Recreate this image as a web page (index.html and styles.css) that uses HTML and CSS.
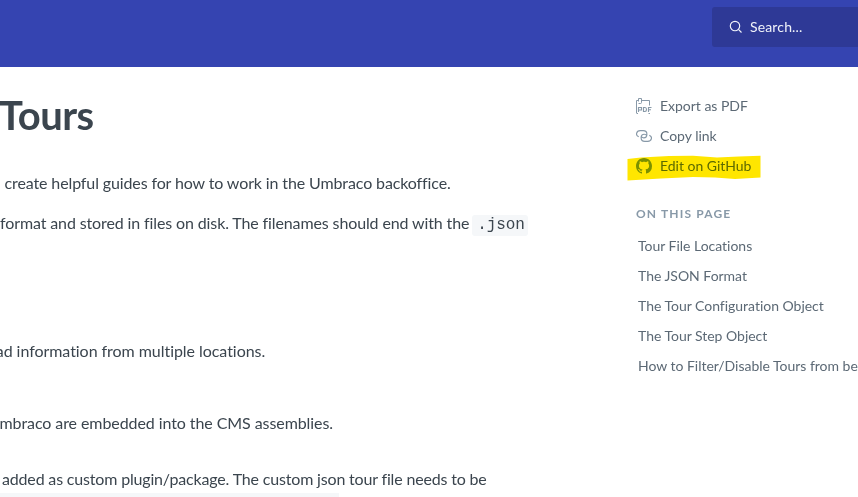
FILE: index.html
```
<!DOCTYPE html>
<html lang="en">
<head>
<meta charset="utf-8">
<title>Tours</title>
<link rel="stylesheet" href="styles.css">
</head>
<body>
<header class="topbar">
  <div class="search">
    <svg width="14" height="14" viewBox="0 0 14 14" fill="none" stroke="currentColor" stroke-width="1.15"><circle cx="6" cy="6" r="4.7"/><path d="M9.4 9.4 12.5 12.5"/></svg>
    <span>Search...</span>
  </div>
</header>
<div class="layout">
  <main class="content">
    <h1>Tours</h1>
    <p class="intro">to create helpful guides for how to work in the Umbraco backoffice.</p>
    <p class="format">format and stored in files on disk. The filenames should end with the <code>.json</code></p>
    <p class="locations">load information from multiple locations.</p>
    <p class="core">Umbraco are embedded into the CMS assemblies.</p>
    <p class="plugin">added as custom plugin/package. The custom json tour file needs to be</p>
    <div class="codeline"></div>
  </main>
  <aside class="side">
    <nav class="actions">
      <a><svg width="16" height="16" viewBox="0 0 16 16" fill="none" stroke="currentColor"><path d="M.5 15V2.5H2M5.5 2.5H13.5V7.5M2.5 3.5V.5H5.5V4.5Q5.5 5.5 4.5 5.5H2.5M.5 15.5H2M12.5 15.5H14"/><path stroke-width="1.15" d="M2.5 14V9.5H5.5V12H2.5M7.5 9V13.5H9Q10.5 13.5 10.5 11.5T9 9.5H7.5M12.5 14V9.5H15.5M12.5 11.7H15"/></svg><span>Export as PDF</span></a>
      <a><svg width="16" height="16" viewBox="0 0 16 16" fill="none" stroke="currentColor" stroke-width="1.15" stroke-linecap="round"><path d="M2.3 8.6C.8 7.8.3 6.6.6 5.3 1 3.6 2.5 2.6 4.2 2.6H7.2C9.5 2.6 10.9 4.2 10.9 6.2S9.5 9.8 7.7 9.8C6.4 9.8 5.5 9 5.3 8.1M13.7 7.4C15.2 8.2 15.7 9.4 15.4 10.7 15 12.4 13.5 13.4 11.8 13.4H8.8C6.5 13.4 5.1 11.8 5.1 9.8S6.5 6.2 8.3 6.2C9.6 6.2 10.5 7 10.7 7.9"/></svg><span>Copy link</span></a>
      <a class="marked"><svg width="16" height="16" viewBox="0 0 16 16" fill="currentColor"><path d="M8 0C3.58 0 0 3.58 0 8c0 3.54 2.29 6.53 5.47 7.59.4.07.55-.17.55-.38 0-.19-.01-.82-.01-1.49-2.01.37-2.53-.49-2.69-.94-.09-.23-.48-.94-.82-1.13-.28-.15-.68-.52-.01-.53.63-.01 1.08.58 1.23.82.72 1.21 1.87.87 2.33.66.07-.52.28-.87.51-1.07-1.78-.2-3.64-.89-3.64-3.95 0-.87.31-1.59.82-2.15-.08-.2-.36-1.02.08-2.12 0 0 .67-.21 2.2.82.64-.18 1.32-.27 2-.27s1.36.09 2 .27c1.53-1.04 2.2-.82 2.2-.82.44 1.1.16 1.92.08 2.12.51.56.82 1.27.82 2.15 0 3.07-1.87 3.75-3.65 3.95.29.25.54.73.54 1.48 0 1.07-.01 1.93-.01 2.2 0 .21.15.46.55.38A8.01 8.01 0 0 0 16 8c0-4.42-3.58-8-8-8z"/></svg><span>Edit on GitHub</span>
        <svg class="marker" width="134" height="26" viewBox="0 0 134 26"><path d="M.5 4 14 2.5 42 1 66 .8 90 2.5 112 1.5 133.5 .8V22.5L108 24 88 22.5 66 22 34 23.5 .5 25.5Z"/></svg></a>
    </nav>
    <h2>ON THIS PAGE</h2>
    <nav class="toc">
      <a>Tour File Locations</a>
      <a>The JSON Format</a>
      <a>The Tour Configuration Object</a>
      <a>The Tour Step Object</a>
      <a>How to Filter/Disable Tours from being</a>
    </nav>
  </aside>
</div>
</body>
</html>
```
FILE: styles.css
```
* { box-sizing: border-box; }
body {
  margin: 0;
  height: 497px;
  overflow: hidden;
  background: #fff;
  color: #3b454e;
  font: 16px/24px Lato, "Liberation Sans", sans-serif;
  font-variant-ligatures: none;
}
.topbar {
  height: 67px;
  padding-top: 7px;
  background: #3544b1;
  display: flex;
  justify-content: flex-end;
}
.search {
  width: 146px;
  height: 40px;
  padding-left: 17px;
  display: flex;
  align-items: center;
  gap: 7px;
  background: #2e3996;
  border-radius: 3px 0 0 3px;
  color: #f1f3fa;
  font-size: 14px;
  letter-spacing: .15px;
}
.layout { display: flex; height: 430px; }
.content { width: 636px; flex: none; white-space: nowrap; overflow: hidden; }
h1 {
  margin: 23px 0 0 -1px;
  font-size: 40px;
  line-height: 50px;
  font-weight: 700;
  letter-spacing: -.5px;
}
p { margin: 0; letter-spacing: -.12px; }
.intro { margin: 31px 0 0 -14px; }
.format { margin-top: 16px; }
.locations { margin: 104px 0 0 -17px; letter-spacing: -.05px; }
.core { margin: 48px 0 0 -12px; letter-spacing: -.08px; }
.plugin { margin: 32px 0 0 2px; letter-spacing: -.17px; }
code {
  padding: 1px 3px 2px 5px;
  margin-left: -1px;
  background: #f5f7f9;
  border-radius: 3px;
  font: 16px/16px "Liberation Mono", monospace;
  letter-spacing: -.1px;
}
.codeline { width: 339px; height: 10px; margin-top: 2px; background: #f5f7f9; }
.side { flex: 1; min-width: 0; color: #5c6975; font-size: 14px; white-space: nowrap; letter-spacing: -.02px; }
.actions { padding-top: 24px; }
.actions a { display: flex; align-items: center; gap: 8px; height: 30px; position: relative; }
.actions a > svg { color: #8899a8; flex: none; }
.actions .marked { color: #5c7575; }
.actions .marked > svg { color: #7ba0a8; }
.actions .marker {
  position: absolute;
  left: -9px;
  top: 4px;
  fill: #ffe600;
  mix-blend-mode: multiply;
}
h2 {
  margin: 21px 0 5px;
  color: #8899a8;
  font-size: 12px;
  line-height: 24px;
  font-weight: 700;
  letter-spacing: 1.15px;
}
.toc { padding-left: 2px; }
.toc a { display: block; height: 30px; line-height: 30px; }
```
